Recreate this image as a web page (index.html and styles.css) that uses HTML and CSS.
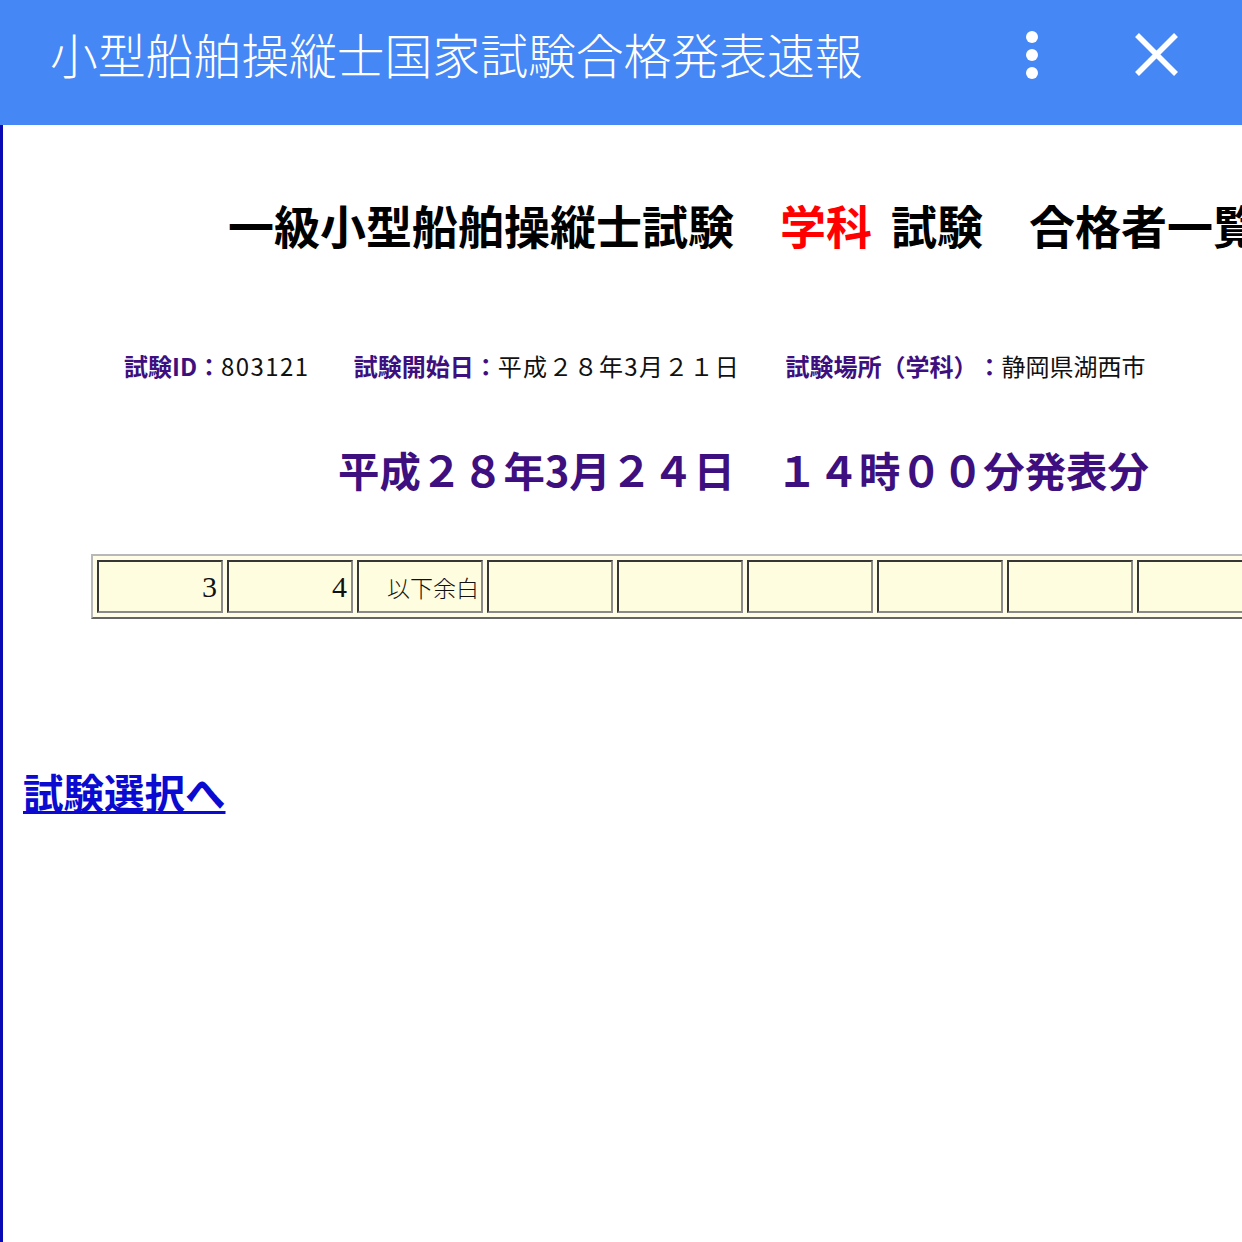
FILE: index.html
```html
<!DOCTYPE html>
<html lang="ja">
<head>
  <meta charset="UTF-8" />
  <title>小型船舶操縦士国家試験合格発表速報</title>
  <link rel="stylesheet" href="styles.css">
</head>
<body>
  <div class="topbar">
    <div class="topbar-title">小型船舶操縦士国家試験合格発表速報</div>
    <div class="topbar-icons">
      <svg class="icon-more" width="24" height="60" viewBox="0 0 24 60">
        <circle cx="12" cy="12" r="6" fill="#fff"/>
        <circle cx="12" cy="30" r="6" fill="#fff"/>
        <circle cx="12" cy="48" r="6" fill="#fff"/>
      </svg>
      <svg class="icon-close" width="48" height="48" viewBox="0 0 48 48">
        <path d="M5 4 L44 43 M44 4 L5 43" stroke="#fff" stroke-width="5.5" fill="none"/>
      </svg>
    </div>
  </div>

  <div class="page">
    <h1 class="exam-title">一級小型船舶操縦士試験　<span class="red">学科</span><span class="sp"></span>試験　合格者一覧</h1>

    <div class="exam-info">
      <span class="label">試験ID：</span><span class="value num">803121</span>
      <span class="label gap1">試験開始日：</span><span class="value date">平成２８年3月２１日</span>
      <span class="label gap2">試験場所（学科）：</span><span class="value">静岡県湖西市</span>
    </div>

    <div class="announce">平成２８年3月２４日　１４時００分発表分</div>

    <table class="passers">
      <tr>
        <td class="num">3</td>
        <td class="num">4</td>
        <td class="rest">以下余白</td>
        <td></td>
        <td></td>
        <td></td>
        <td></td>
        <td></td>
        <td></td>
        <td></td>
      </tr>
    </table>

    <a class="back-link" href="#">試験選択へ</a>
  </div>
</body>
</html>
```

FILE: styles.css
```css
* {
  margin: 0; padding: 0; box-sizing: border-box;
}

html, body {
  width: 1242px;
  height: 1242px;
  overflow: hidden;
  background: #fff;
}

body {
  font-family: "Noto Sans CJK JP", "Noto Sans", sans-serif;
  text-spacing-trim: space-all;
}

.topbar {
  height: 125px;
  background: #4587f4;
  display: flex;
  align-items: center;
  justify-content: space-between;
  padding: 0 62px 0 50px;
  color: #fff;
}

.topbar-title {
  font-size: 47.8px;
  font-weight: 300;
  margin-top: -18px;
}

.topbar-icons {
  display: flex;
  align-items: center;
  gap: 88px;
  margin-top: -16px;
}

.page {
  height: 1117px;
  border-left: 3px solid #0a0ab4;
  white-space: nowrap;
  overflow: hidden;
}

.exam-title {
  font-size: 46px;
  line-height: 55px;
  font-weight: 700;
  color: #000;
  padding-left: 225px;
  margin-top: 72px;
}

.exam-title .red {
  color: #ff0000;
}

.exam-title .sp {
  display: inline-block;
  width: 19px;
}

.exam-info {
  font-size: 24px;
  line-height: 28px;
  padding-left: 121px;
  margin-top: 100px;
}

.exam-info .label {
  color: #3e0f7e;
  font-weight: 700;
}

.exam-info .gap1 {
  margin-left: 39px;
}

.exam-info .gap2 {
  margin-left: 40px;
}

.exam-info .value {
  color: #111;
}

.exam-info .num {
  letter-spacing: 1.4px;
}

.exam-info .date {
  letter-spacing: 1.3px;
}

.announce {
  font-size: 41.4px;
  line-height: 48px;
  font-weight: 700;
  color: #3e0f7e;
  padding-left: 335px;
  margin-top: 65px;
}

.passers {
  margin-top: 61px;
  margin-left: 88px;
  border-collapse: separate;
  border-spacing: 4px;
  border: 2px outset #b8b8b8;
  background: #fffde6;
}

.passers td {
  width: 126px;
  min-width: 126px;
  height: 53px;
  border: 2px inset #8a8a8a;
  background: #fffde0;
  color: #111;
  padding: 0 4px;
}

.passers .num {
  text-align: right;
  font-family: "Liberation Serif", serif;
  font-size: 30px;
}

.passers .rest {
  text-align: right;
  font-size: 23px;
  font-weight: 300;
  padding-right: 2px;
}

.back-link {
  display: inline-block;
  margin-top: 150px;
  margin-left: 20px;
  font-size: 40.5px;
  line-height: 46px;
  font-weight: 700;
  color: #0a0ad0;
  text-decoration: underline;
  text-decoration-thickness: 3px;
}
```
